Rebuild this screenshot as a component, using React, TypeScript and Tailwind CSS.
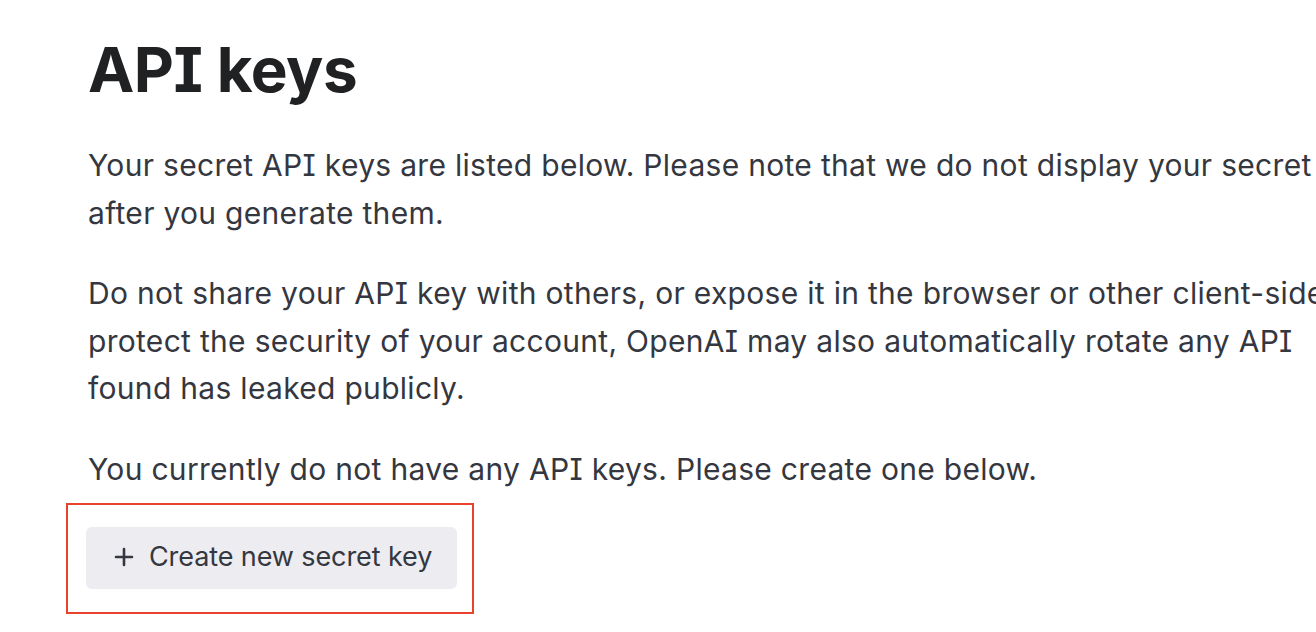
import { FC } from "react";

const Plus: FC = () => (
  <svg width="20" height="20" viewBox="0 0 20 20" fill="none" stroke="currentColor" strokeWidth="2.6" strokeLinecap="round">
    <path d="M10 2v16M2 10h16" />
  </svg>
);

const App: FC = () => {
  return (
    <div className="w-[1316px] h-[632px] overflow-hidden bg-white font-['Inter',sans-serif] [font-feature-settings:'cv08']">
      <div className="w-[1600px] pl-[88px] pt-[31px]">
        <h1 className="text-[62px] leading-[77px] font-bold text-[#202123] tracking-[-0.5px]">API keys</h1>

        <div className="mt-[34px] text-[30px] leading-[47.5px] tracking-[0.3px] text-[#353740] whitespace-nowrap">
          <p>
            Your secret API keys are listed below. Please note that we do not display your secret
            <br />
            after you generate them.
          </p>
          <p className="mt-[33px]">
            Do not share your API key with others, or expose it in the browser or other client-side
            <br />
            protect the security of your account, OpenAI may also automatically rotate any API
            <br />
            found has leaked publicly.
          </p>
          <p className="mt-[33px]">You currently do not have any API keys. Please create one below.</p>
        </div>

        <div className="mt-[10px] -ml-[22px] w-[408px] h-[111px] border-2 border-[#e8412c] pl-[18px] pt-[22px]">
          <button className="flex items-center gap-[15px] h-[62px] w-[371px] rounded-[6px] bg-[#ececf1] pl-[28px] pb-[2px] text-[27px] tracking-[-0.1px] text-[#353740]">
            <Plus />
            <span>Create new secret key</span>
          </button>
        </div>
      </div>
    </div>
  );
};

export default App;
